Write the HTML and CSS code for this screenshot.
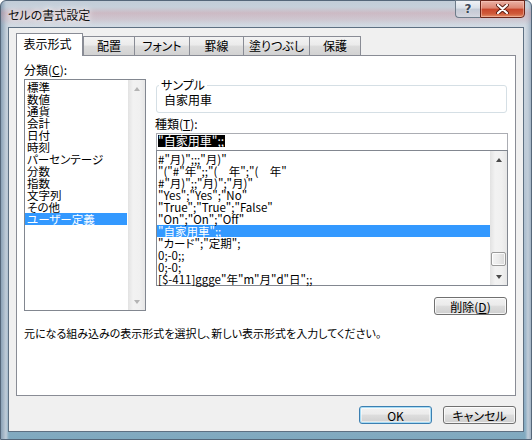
FILE: index.html
```html
<!DOCTYPE html>
<html lang="ja">
<head>
<meta charset="utf-8">
<title>セルの書式設定</title>
<link rel="stylesheet" href="styles.css">
</head>
<body>
<div class="window">
  <div class="titlebar">
    <span class="title">セルの書式設定</span>
    <div class="caption-buttons">
      <div class="cap-btn help">?</div>
      <div class="cap-btn close">
        <svg width="13" height="10" viewBox="0 0 13 10">
          <path d="M2 1 L11 9 M11 1 L2 9" stroke="#5a1d12" stroke-width="4" stroke-linecap="round"/>
          <path d="M2 1 L11 9 M11 1 L2 9" stroke="#ffffff" stroke-width="2.2" stroke-linecap="round"/>
        </svg>
      </div>
    </div>
  </div>
  <div class="client">
    <div class="tabs">
      <div class="tab selected">表示形式</div>
      <div class="tab tab-w52">配置</div>
      <div class="tab tab-w56">フォント</div>
      <div class="tab tab-w55">罫線</div>
      <div class="tab tab-w67">塗りつぶし</div>
      <div class="tab tab-w52">保護</div>
    </div>
    <div class="panel">
      <div class="panel-grid">
        <div class="col-left">
          <div class="label">分類(<u>C</u>):</div>
          <div class="listbox category">
            <ul class="items">
              <li>標準</li>
              <li>数値</li>
              <li>通貨</li>
              <li>会計</li>
              <li>日付</li>
              <li>時刻</li>
              <li>パーセンテージ</li>
              <li>分数</li>
              <li>指数</li>
              <li>文字列</li>
              <li>その他</li>
              <li class="active">ユーザー定義</li>
            </ul>
            <div class="scrollbar disabled">
              <div class="sb-btn"><span class="arrow up"></span></div>
              <div class="sb-track"></div>
              <div class="sb-btn"><span class="arrow down"></span></div>
            </div>
          </div>
        </div>
        <div class="col-right">
          <fieldset class="sample">
            <legend>サンプル</legend>
            <div class="sample-value">自家用車</div>
          </fieldset>
          <div class="label">種類(<u>T</u>):</div>
          <div class="textbox"><span class="sel">"自家用車";;</span></div>
          <div class="listbox formats">
            <ul class="items">
              <li>#"月)";;;"月)"</li>
              <li>"("#"年";;"(　年";"(　年"</li>
              <li>#"月)";;"月)";"月)"</li>
              <li>"Yes";"Yes";"No"</li>
              <li>"True";"True";"False"</li>
              <li>"On";"On";"Off"</li>
              <li class="active">"自家用車";;</li>
              <li>"カード";"定期";</li>
              <li>0;-0;;</li>
              <li>0;-0;</li>
              <li>[$-411]ggge"年"m"月"d"日";;</li>
            </ul>
            <div class="scrollbar">
              <div class="sb-btn"><span class="arrow up"></span></div>
              <div class="sb-track"><div class="sb-thumb"></div></div>
              <div class="sb-btn"><span class="arrow down"></span></div>
            </div>
          </div>
          <div class="row-end">
            <button class="btn">削除(<u>D</u>)</button>
          </div>
        </div>
      </div>
      <p class="desc">元になる組み込みの表示形式を選択し、新しい表示形式を入力してください。</p>
    </div>
    <div class="footer">
      <button class="btn default">OK</button>
      <button class="btn">キャンセル</button>
    </div>
  </div>
</div>
</body>
</html>
```

FILE: styles.css
```css
* { box-sizing: border-box; }
html, body { margin: 0; padding: 0; }
body {
  width: 532px;
  height: 440px;
  overflow: hidden;
  font-family: "Noto Sans CJK JP", "Noto Sans", sans-serif;
  font-size: 12px;
  line-height: 12px;
  color: #000;
  font-feature-settings: "palt";
  background: #fff;
}

.window {
  width: 532px;
  height: 440px;
  display: flex;
  flex-direction: column;
  padding: 0 7px 7px 7px;
  border: 1px solid #55677a;
  border-radius: 6px 6px 0 0;
  background:
    linear-gradient(180deg, rgba(0,0,0,0) 6px, rgba(210,140,150,0.35) 12px, rgba(210,150,160,0.25) 18px, rgba(0,0,0,0) 24px),
    linear-gradient(90deg, #8aa1b6 0, #c0ccd8 5px, rgba(0,0,0,0) 8px, rgba(0,0,0,0) 524px, #c0ccd8 527px, #8aa1b6 532px),
    linear-gradient(180deg, #c2cdd8 0, #d4dce4 30px, #b3c3d2 200px, #8fadc4 400px, #7fa9bf 440px);
}

.titlebar {
  height: 26px;
  display: flex;
  justify-content: space-between;
  align-items: flex-start;
}
.title {
  padding-top: 7px;
  line-height: 14px;
  font-size: 12px;
  color: #111;
  text-shadow: 0 0 5px #fff, 0 0 8px rgba(255,255,255,0.9);
}
.caption-buttons {
  display: flex;
  margin-top: -1px;
  margin-right: -1px;
}
.cap-btn {
  height: 18px;
  display: flex;
  align-items: center;
  justify-content: center;
}
.help {
  width: 25px;
  border: 1px solid #6e7c8a;
  border-right: none;
  border-radius: 0 0 0 4px;
  background: linear-gradient(180deg, rgba(255,255,255,0.75) 0, rgba(230,236,242,0.6) 45%, rgba(190,204,216,0.6) 50%, rgba(215,225,234,0.7) 100%);
  font-family: "DejaVu Sans", sans-serif;
  font-weight: bold;
  font-size: 12px;
  color: #3a4756;
  text-shadow: 0 0 2px #fff;
}
.close {
  width: 45px;
  border: 1px solid #6b2418;
  border-radius: 0 0 4px 0;
  background: linear-gradient(180deg, #eab1a5 0, #dd8571 45%, #c8452a 50%, #cf5a3a 80%, #e3906a 100%);
  box-shadow: inset 0 0 0 1px rgba(255,210,200,0.45);
}

.client {
  flex: 1;
  display: flex;
  flex-direction: column;
  border: 1px solid #5e7082;
  background: #f0f0f0;
  padding: 5px 7px 7px 7px;
}

.tabs {
  display: flex;
  align-items: flex-end;
  height: 22px;
}
.tab {
  height: 19px;
  line-height: 18px;
  text-align: center;
  border: 1px solid #898c95;
  border-bottom: none;
  margin-right: -1px;
  background: linear-gradient(180deg, #f3f3f3 0, #ebebeb 45%, #dcdcdc 50%, #d2d2d2 100%);
  white-space: nowrap;
}
.tab-w52 { width: 52px; }
.tab-w55 { width: 55px; }
.tab-w56 { width: 56px; }
.tab-w67 { width: 67px; }
.tab.selected {
  position: relative;
  z-index: 1;
  width: 67px;
  height: 23px;
  line-height: 20px;
  margin-right: 0;
  margin-bottom: -1px;
  padding: 0 4px 0 0;
  background: #fff;
}

.panel {
  flex: 1;
  background: #fff;
  border: 1px solid #898c95;
  padding: 8px 7px 0 7px;
}
.panel-grid {
  display: grid;
  grid-template-columns: 122px 1fr;
  column-gap: 9px;
  align-items: start;
}
.label {
  height: 12px;
  line-height: 12px;
  margin-bottom: 3px;
  white-space: nowrap;
}
u { text-decoration-thickness: 1px; text-underline-offset: 1px; }

.listbox {
  display: flex;
  border: 1px solid #828790;
  background: #fff;
}
.items {
  list-style: none;
  margin: 0;
  padding: 1px 0 0 0;
  flex: 1;
  min-width: 0;
}
.items li {
  height: 12px;
  line-height: 12px;
  padding-left: 2px;
  white-space: nowrap;
}
.items li.active {
  background: #3399ff;
  color: #fff;
}
.category { height: 232px; }
.category .items li { font-size: 11.5px; }
.category .items li.active { margin-right: 1px; }

.col-right { padding-left: 1px; }
.sample {
  margin: 15px 1px 0 0;
  padding: 0;
  border: 1px solid #d5dfe5;
  border-radius: 3px;
  min-width: 0;
}
.sample legend {
  margin-left: 2px;
  padding: 0 2px;
  line-height: 12px;
}
.sample-value {
  padding: 3px 0 6px 7px;
  line-height: 12px;
}
.col-right .label { margin-top: 5px; margin-left: -1px; }

.textbox {
  height: 17px;
  border: 1px solid #abadb3;
  border-bottom: none;
  padding: 1px 0 0 1px;
  line-height: 12px;
}
.sel {
  display: inline-block;
  height: 12px;
  line-height: 12px;
  background: #000;
  color: #fff;
  padding-right: 1px;
}

.formats { height: 136px; }
.formats .items { padding-top: 2px; }
.formats .items li { padding-left: 1px; font-size: 11.5px; }

.scrollbar {
  width: 17px;
  flex: none;
  display: flex;
  flex-direction: column;
  background: linear-gradient(90deg, #e2e2e2 0, #f2f2f2 30%, #f0f0f0 70%, #e6e6e6 100%);
}
.sb-btn {
  height: 17px;
  display: flex;
  align-items: center;
  justify-content: center;
}
.sb-track {
  flex: 1;
  display: flex;
  flex-direction: column;
  justify-content: flex-end;
  padding: 0 1px 2px 1px;
}
.sb-thumb {
  height: 14px;
  border: 1px solid #9a9a9a;
  border-radius: 2px;
  background: linear-gradient(90deg, #f4f4f4 0, #eaeaea 50%, #d9d9d9 100%);
  box-shadow: inset 0 0 0 1px rgba(255,255,255,0.8);
}
.arrow {
  width: 0;
  height: 0;
  border-left: 3.5px solid transparent;
  border-right: 3.5px solid transparent;
}
.arrow.up { border-bottom: 4px solid #4a4a4a; }
.arrow.down { border-top: 4px solid #4a4a4a; }
.disabled .arrow.up { border-bottom-color: #b4b4b4; }
.disabled .arrow.down { border-top-color: #b4b4b4; }

.row-end {
  display: flex;
  justify-content: flex-end;
  margin-top: 11px;
  padding-right: 1px;
}

.btn {
  width: 73px;
  height: 18px;
  padding: 0;
  margin: 0;
  border: 1px solid #707070;
  border-radius: 3px;
  background: linear-gradient(180deg, #f2f2f2 0, #ebebeb 45%, #dddddd 50%, #cfcfcf 100%);
  box-shadow: inset 0 0 0 1px rgba(255,255,255,0.75);
  font-family: "Noto Sans CJK JP", "Noto Sans", sans-serif;
  font-feature-settings: "palt";
  font-size: 12px;
  line-height: 15px;
  color: #000;
}
.btn.default {
  border-color: #3c7fb1;
  box-shadow: inset 0 0 0 1px #a8dcf5, inset 0 0 0 2px rgba(255,255,255,0.5);
}

.desc {
  margin: 12px 0 0 0;
  font-size: 11px;
  line-height: 12px;
  white-space: nowrap;
}

.footer {
  display: flex;
  justify-content: flex-end;
  gap: 11px;
  margin-top: 10px;
}
```
